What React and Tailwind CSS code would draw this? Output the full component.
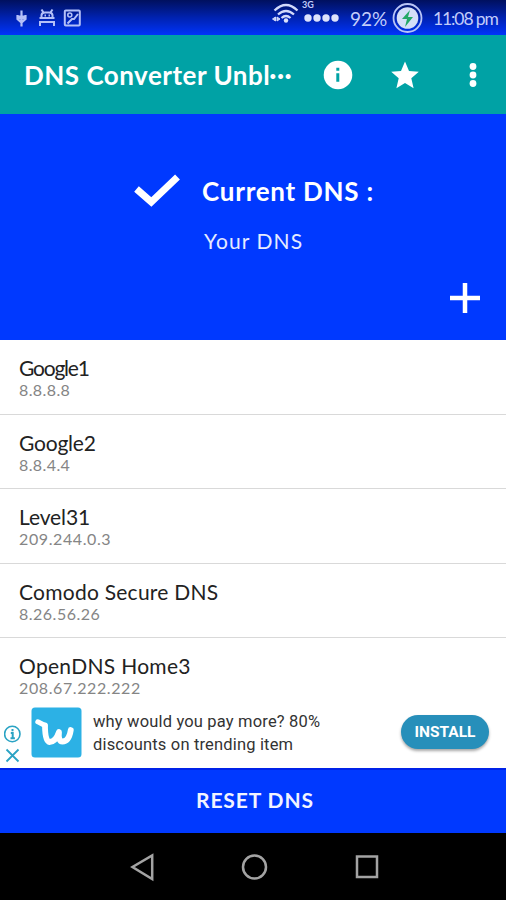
const servers = [
  { name: 'Google1', ip: '8.8.8.8', nameCls: 'tracking-[-1.2px]', ipCls: 'tracking-[0.4px]' },
  { name: 'Google2', ip: '8.8.4.4', nameCls: 'tracking-[-0.2px]', ipCls: 'tracking-[0.4px]' },
  { name: 'Level31', ip: '209.244.0.3', nameCls: 'tracking-[-0.1px]', ipCls: 'tracking-[0.6px]' },
  { name: 'Comodo Secure DNS', ip: '8.26.56.26', nameCls: 'tracking-[0.25px]', ipCls: 'tracking-[0.5px]' },
  { name: 'OpenDNS Home3', ip: '208.67.222.222', nameCls: 'tracking-[0.3px]', ipCls: 'tracking-[0.6px]' },
];

function StatusBar() {
  return (
    <div className="relative h-[35px] shrink-0 bg-linear-to-b from-[#00105e] via-[#0022b0] to-[#0034fb] text-[#c3cdfa]">
      <svg className="absolute inset-0" width="506" height="35" viewBox="0 0 506 35" fill="none" stroke="#b4c0f8" strokeWidth="1.6">
        <path d="M21.500 10.500v16M17.500 15v4l4 3.500l4-3.500v-4" strokeWidth="2.200" />
        <path d="M17 17.500h9" strokeWidth="4" />
        <path d="M40 26v-4h14v4M39.500 18h15M41.500 18v-3q.500-2.500 3.500-2.500h4q3 0 3.500 2.500v3M41.500 9.500l2 3M52.500 9.500l-2 3M44.500 15.500h1.500M48.500 15.500h1.500" strokeWidth="2" />
        <rect x="64.800" y="10.500" width="15" height="15" rx="1" strokeWidth="2" />
        <path d="M67.500 23.500l4.500-4.500 2 0 4-5" strokeWidth="2" />
        <circle cx="69.800" cy="15" r="2" />
        <g stroke="#d3dafb" strokeWidth="2.300">
          <path d="M274.500 10.500q11.500-11 23 0M278 14.500q8-7 16 0M281.500 18q4.500-4 9 0" />
          <path d="M272.500 19l3-2v4zM280 19l-3-2v4z" fill="#c3cdfa" strokeWidth="1" />
        </g>
        <g fill="#dce2fc" stroke="none">
          <circle cx="286" cy="20.500" r="2.200" />
          <circle cx="308" cy="18" r="3.700" />
          <circle cx="317" cy="18" r="3.700" />
          <circle cx="326" cy="18" r="3.700" />
          <circle cx="335" cy="18" r="3.700" />
        </g>
        <circle cx="407.500" cy="18" r="14" stroke="#b9c5f7" strokeWidth="1.800" />
        <circle cx="407.500" cy="18" r="10.800" fill="#d5def8" stroke="none" />
        <path d="M410 10l-8 9h5l-2 8 8-10h-5z" fill="#23a866" stroke="none" />
      </svg>
      <span className="absolute left-[302px] top-0 text-[9px] leading-[10px] font-bold">3G</span>
      <span className="absolute left-[350px] top-[7px] text-[19px] leading-6">92%</span>
      <span className="absolute left-[433px] top-[7px] whitespace-nowrap text-[17.500px] leading-6 tracking-[-1.1px]">11:08 pm</span>
    </div>
  );
}

function AppBar() {
  return (
    <header className="flex h-[79px] shrink-0 items-center bg-[#00a2a5] pl-6 text-white">
      <h1 className="w-[299px] whitespace-nowrap text-[26px] leading-8 font-bold tracking-[0.5px]">DNS Converter Unbl···</h1>
      <svg width="30" height="30" viewBox="0 0 30 30" className="shrink-0">
        <circle cx="15" cy="15" r="14.300" fill="#fff" />
        <path d="M13.300 7.800h3v3h-3zM13.300 13.300h3v8.500h-3z" fill="#00a2a5" />
      </svg>
      <svg width="28" height="28" viewBox="0 0 28 28" className="ml-[38px] shrink-0">
        <path d="M14 .5l4 9.400 9.800.9-7.500 6.500 2.300 9.900L14 22l-8.600 5.200 2.300-9.900L.2 10.800l9.800-.9z" fill="#fff" />
      </svg>
      <svg width="8" height="26" viewBox="0 0 8 26" className="ml-[50px] shrink-0" fill="#fff">
        <circle cx="4" cy="4.500" r="3.400" />
        <circle cx="4" cy="13" r="3.400" />
        <circle cx="4" cy="21.500" r="3.400" />
      </svg>
    </header>
  );
}

function CurrentDns() {
  return (
    <section className="flex h-[226px] shrink-0 flex-col bg-[#0039ff] pt-[60px] text-white">
      <div className="flex h-8 items-center pl-[134px]">
        <svg width="46" height="34" viewBox="0 0 46 34">
          <path d="M2.500 16L17.300 29 43.500 4" fill="none" stroke="#fff" strokeWidth="7" />
        </svg>
        <span className="ml-[22px] pt-0.5 whitespace-nowrap text-[26px] leading-8 font-bold tracking-[0.75px]">Current DNS :</span>
      </div>
      <div className="mt-[21px] pl-[204px] text-[21px] leading-7 tracking-[1.1px] text-[#e6ebff]">Your DNS</div>
      <svg width="32" height="32" viewBox="0 0 32 32" className="mt-[27px] ml-[449px]">
        <path d="M16 1v30M1 16h30" stroke="#fff" strokeWidth="4.500" />
      </svg>
    </section>
  );
}

function AdBanner() {
  return (
    <div className="flex h-[65px] shrink-0 items-start bg-white pl-1 font-['Roboto',sans-serif]">
      <svg width="17" height="46" viewBox="0 0 17 46" className="mt-[21px]" fill="none" stroke="#2aa3c4" strokeWidth="1.600">
        <circle cx="8.300" cy="10" r="7.700" />
        <path d="M8.500 5v2.200M6.800 9h1.900v5M6.500 14.200h4.400" strokeWidth="2" />
        <path d="M2.500 25.500l12 12M14.500 25.500l-12 12" strokeWidth="1.800" />
      </svg>
      <svg width="51" height="51" viewBox="0 0 51 51" className="mt-1 ml-[10px]">
        <rect x=".5" y=".5" width="50" height="50" rx="3.500" fill="#2cb1e5" />
        <g fill="none" stroke="#fff" strokeLinecap="round" strokeLinejoin="round">
          <path d="M6.800 14.800L14 18.500" strokeWidth="5" />
          <path d="M14 18.500Q14 34.500 18.500 35Q24.500 35 28 25Q27 34.500 31.500 34.500Q38 34.500 39.800 23" strokeWidth="5.800" />
        </g>
      </svg>
      <div className="mt-[7px] ml-[11px] w-[308px] whitespace-nowrap text-[16.500px] leading-[23px] tracking-[0.17px] text-[#333]">
        <p>why would you pay more? 80%</p>
        <p>discounts on trending item</p>
      </div>
      <div className="mt-3 h-[34px] w-[88px] rounded-full bg-[#278fba] text-center text-[15.500px] leading-[34px] font-bold text-white shadow-[0_2px_3px_rgba(0,0,0,0.35)]">INSTALL</div>
    </div>
  );
}

export default function App() {
  return (
    <div className="flex h-[900px] w-[506px] flex-col overflow-hidden bg-white font-['Lato',sans-serif]">
      <StatusBar />
      <AppBar />
      <CurrentDns />
      <ul className="h-[363px] shrink-0 overflow-hidden">
        {servers.map((s) => (
          <li key={s.name} className="h-[74.500px] border-b border-[#d9d9d9] pt-4 pl-[19px] whitespace-nowrap">
            <div className={`text-[21px] leading-6 text-[#222] ${s.nameCls}`}>{s.name}</div>
            <div className={`text-[16px] leading-5 text-[#858585] ${s.ipCls}`}>{s.ip}</div>
          </li>
        ))}
      </ul>
      <AdBanner />
      <div className="flex h-[65px] shrink-0 items-center justify-center border-t-2 border-[#0022e8] bg-[#0039ff] pb-1 pl-1 text-[21px] font-bold tracking-[0.9px] text-[#f1f3ff]">RESET DNS</div>
      <nav className="flex h-[67px] shrink-0 justify-center bg-black">
        <svg width="506" height="67" viewBox="0 0 506 67" fill="none" stroke="#a3a3a3" strokeWidth="2.500">
          <path d="M152.200 22.500v23.500L132.500 34z" />
          <circle cx="254.500" cy="34" r="11.500" />
          <rect x="357" y="23.500" width="20" height="20.500" />
        </svg>
      </nav>
    </div>
  );
}
